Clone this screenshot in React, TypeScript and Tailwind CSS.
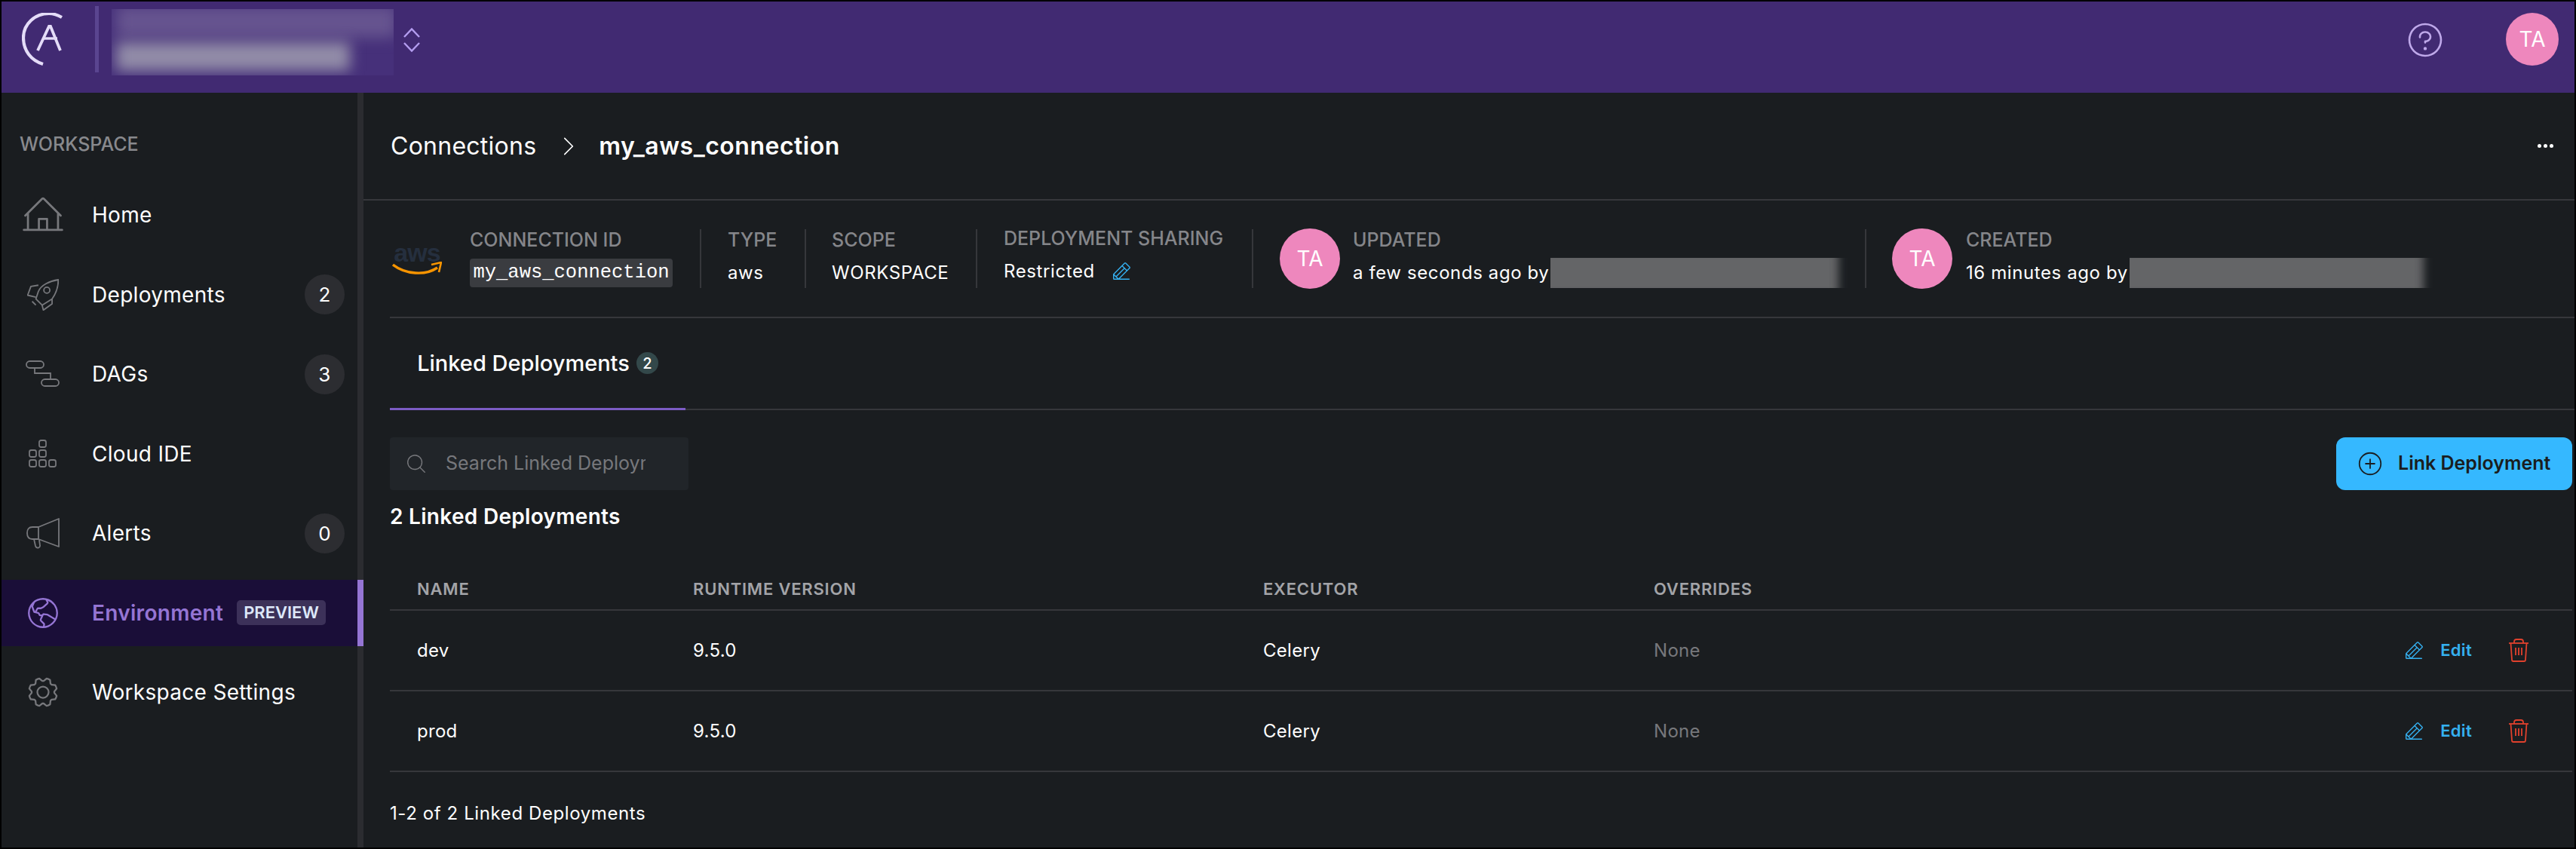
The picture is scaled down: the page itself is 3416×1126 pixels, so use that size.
import React from 'react';
import {
  PiCaretRightLight,
  PiGearLight,
  PiGlobeHemisphereWestLight,
  PiHouseLineLight,
  PiMagnifyingGlassLight,
  PiPencilLineLight,
  PiPlusCircleLight,
  PiQuestionLight,
} from 'react-icons/pi';

function AstroLogo() {
  return (
    <svg width="54" height="70" viewBox="0 0 54 70" fill="none" className="text-[#e4dcf8]">
      <path d="M53 6 C 46 2 41 1 36 1 C 17 1 2 15 2 33 C 2 50 12 63 28 68" stroke="currentColor" strokeWidth="4.2" />
      <path d="M21 50 L36 18 H38 L51 50" stroke="currentColor" strokeWidth="3.8" />
      <path d="M28 34 L47 34" stroke="currentColor" strokeWidth="3.4" />
    </svg>
  );
}

function UpDownIcon() {
  return (
    <svg width="22" height="32" viewBox="0 0 22 32" fill="none" stroke="#b49df0" strokeWidth="2.4">
      <path d="M1 12 L11 1.5 L21 12" />
      <path d="M1 20 L11 30.5 L21 20" />
    </svg>
  );
}

function RocketIcon() {
  return (
    <svg width="42" height="42" viewBox="0 0 127 127" fill="none" stroke="currentColor" strokeWidth="5.5" strokeLinejoin="round">
      <path d="M125 3 C 90 8 55 25 45 50 L35 80 L60 105 L100 80 C 118 55 125 30 125 3 Z" />
      <circle cx="79" cy="45" r="12" />
      <path d="M45 25 L15 30 L2 65 L35 73" />
      <path d="M100 80 L100 100 L65 125 L60 105" />
      <path d="M20 90 L35 105" />
    </svg>
  );
}

function DagIcon() {
  return (
    <svg width="46" height="36" viewBox="0 0 46 36" fill="none" stroke="currentColor" strokeWidth="1.8">
      <rect x="1" y="1" width="23" height="9" rx="4.5" />
      <path d="M12 10 V17 H33 V25" />
      <rect x="21" y="25" width="23" height="9" rx="4.5" />
    </svg>
  );
}

function IdeIcon() {
  return (
    <svg width="40" height="38" viewBox="0 0 40 38" fill="none" stroke="currentColor" strokeWidth="1.8">
      <rect x="15" y="1" width="9" height="9" rx="2.5" />
      <rect x="2" y="14" width="9" height="9" rx="2.5" />
      <rect x="15" y="14" width="9" height="9" rx="2.5" />
      <rect x="2" y="27" width="9" height="9" rx="2.5" />
      <rect x="15" y="27" width="9" height="9" rx="2.5" />
      <rect x="28" y="27" width="9" height="9" rx="2.5" />
    </svg>
  );
}

function MegaphoneIcon() {
  return (
    <svg width="44" height="41" viewBox="0 0 44 41" fill="none" stroke="currentColor" strokeWidth="1.8" strokeLinejoin="round">
      <path d="M43 1 L16 12 H8 Q1 12 1 20 Q1 28 8 28 H16 L43 38 Z" />
      <path d="M16 12 V28" />
      <path d="M10 28 L12 37 Q13 40 16 39.5 Q18.5 38.5 18 36 L17 29" />
    </svg>
  );
}

function TrashIcon() {
  return (
    <svg width="28" height="31" viewBox="0 0 28 31" fill="none" stroke="#e0412d" strokeWidth="1.8">
      <path d="M1 6 H27" />
      <path d="M8 6 V4 Q8 1 11 1 H17 Q20 1 20 4 V6" />
      <path d="M3.5 6 L5 28 Q5 30 7 30 H21 Q23 30 23 28 L24.5 6" />
      <path d="M10 12 V22 M14 12 V22 M18 12 V22" />
    </svg>
  );
}

function AwsLogo() {
  return (
    <div className="ml-[3px] flex flex-col items-center w-[66px] shrink-0">
      <span className="text-[34px] leading-[26px] font-bold text-[#252f3e] font-['Liberation_Sans',sans-serif] tracking-[-1px]">aws</span>
      <svg width="66" height="18" viewBox="0 0 66 18" fill="none" className="-mt-[1px]">
        <path d="M1 4 C 18 17 44 19 60 8" stroke="#f79400" strokeWidth="3.4" />
        <path d="M52 4 L65 1 L62 14" fill="none" stroke="#f79400" strokeWidth="2.6" />
      </svg>
    </div>
  );
}

function Avatar({ size }: { size: string }) {
  return (
    <div className={`${size} rounded-full bg-[#ee87bd] text-white flex items-center justify-center text-[28px] shrink-0`}>
      TA
    </div>
  );
}

function NavItem({ icon, label, count }: { icon: React.ReactNode; label: string; count?: number }) {
  return (
    <div className="h-[88px] flex items-center text-white text-[28px] tracking-[0.3px]">
      <div className="w-[58px] ml-[26px] mr-[36px] flex justify-center text-[#77787c]">{icon}</div>
      <span className="flex-1">{label}</span>
      {count !== undefined && (
        <div className="w-[53px] h-[53px] rounded-full bg-[#2c2d31] flex items-center justify-center text-[26px] mr-[17px]">
          {count}
        </div>
      )}
    </div>
  );
}

function Sidebar() {
  return (
    <aside className="w-[480px] shrink-0 border-r-[8px] border-[#2b2c30] flex flex-col">
      <div className="h-[118px] pl-[24px] pt-[47px] text-[25px] leading-[42px] font-medium text-[#88898d]">WORKSPACE</div>
      <div className="flex flex-col gap-[17.5px]">
        <NavItem icon={<PiHouseLineLight size={58} />} label="Home" />
        <NavItem icon={<RocketIcon />} label="Deployments" count={2} />
        <NavItem icon={<DagIcon />} label="DAGs" count={3} />
        <NavItem icon={<IdeIcon />} label="Cloud IDE" />
        <NavItem icon={<MegaphoneIcon />} label="Alerts" count={0} />
        <div className="relative h-[88px] -mr-[8px] bg-[#1a0e38] border-r-[8px] border-[#9575d4] flex items-center text-[#9575d4] text-[28px]">
          <div className="w-[58px] ml-[26px] mr-[36px] flex justify-center">
            <PiGlobeHemisphereWestLight size={50} />
          </div>
          <span className="font-semibold tracking-[0.3px]">Environment</span>
          <span className="ml-[18px] h-[33px] px-[9px] rounded-[5px] bg-[#3c3159] text-[#dde8fa] text-[22px] font-semibold flex items-center">PREVIEW</span>
        </div>
        <NavItem icon={<PiGearLight size={48} />} label="Workspace Settings" />
      </div>
    </aside>
  );
}

function Blurred() {
  return (
    <div className="flex-1 h-[40px] overflow-hidden">
      <div className="-ml-[12px] -mt-[10px] h-[60px] w-full bg-[#646567] blur-[6px]" />
    </div>
  );
}

function Label({ children }: { children: React.ReactNode }) {
  return <div className="text-[25px] leading-[26px] font-medium text-[#85868a] whitespace-nowrap">{children}</div>;
}

function Divider() {
  return <div className="w-[2px] h-[78px] bg-[#36373b] shrink-0" />;
}

function MetaBar() {
  return (
    <div className="h-[156px] ml-[35px] border-b-2 border-[#36373b] flex items-center">
      <AwsLogo />
      <div className="ml-[37px] mr-[36px]">
        <Label>CONNECTION ID</Label>
        <div className="mt-[12px] h-[38px] w-[269px] rounded-[4px] bg-[#3a3c40] text-white text-[25.5px] flex items-center justify-center font-['Liberation_Mono',monospace] whitespace-nowrap">my_aws_connection</div>
      </div>
      <Divider />
      <div className="w-[137px] pl-[35px]">
        <Label>TYPE</Label>
        <div className="mt-[12px] h-[38px] leading-[38px] text-white text-[24px] tracking-[0.6px]">aws</div>
      </div>
      <Divider />
      <div className="w-[225px] pl-[34px]">
        <Label>SCOPE</Label>
        <div className="mt-[12px] h-[38px] leading-[38px] text-white text-[24px] tracking-[0.6px]">WORKSPACE</div>
      </div>
      <Divider />
      <div className="w-[364px] pl-[35px] -mt-[4px]">
        <Label>DEPLOYMENT SHARING</Label>
        <div className="mt-[12px] h-[38px] flex items-center gap-[20px] text-white text-[24px] tracking-[0.6px]">
          Restricted
          <PiPencilLineLight size={30} className="text-[#35b0f0]" />
        </div>
      </div>
      <Divider />
      <div className="ml-[35px]"><Avatar size="w-[80px] h-[80px]" /></div>
      <div className="ml-[17px] w-[656px] mr-[23px]">
        <Label>UPDATED</Label>
        <div className="mt-[12px] h-[38px] flex items-center gap-[2px] text-white text-[24px] tracking-[0.6px] whitespace-nowrap">
          a few seconds ago by
          <Blurred />
        </div>
      </div>
      <Divider />
      <div className="ml-[34px]"><Avatar size="w-[80px] h-[80px]" /></div>
      <div className="ml-[18px] w-[619px]">
        <Label>CREATED</Label>
        <div className="mt-[12px] h-[38px] flex items-center gap-[2px] text-white text-[24px] tracking-[0.6px] whitespace-nowrap">
          16 minutes ago by
          <Blurred />
        </div>
      </div>
    </div>
  );
}

const rows = ['dev', 'prod'];

function RowActions() {
  return (
    <div className="flex items-center justify-end pr-[57px]">
      <PiPencilLineLight size={30} className="text-[#35b0f0]" />
      <span className="ml-[20px] mr-[48px] text-[22px] font-semibold text-[#35b0f0]">Edit</span>
      <TrashIcon />
    </div>
  );
}

function DeploymentsTable() {
  return (
    <div className="mr-[3px]">
      <div className="mt-[57px] h-[48px] pb-[8px] pl-[36px] grid grid-cols-[366px_756px_518px_1fr] items-center border-b-2 border-[#36373b] text-[22px] font-semibold tracking-[0.8px] text-[#a3a4a8]">
        <div>NAME</div>
        <div>RUNTIME VERSION</div>
        <div>EXECUTOR</div>
        <div>OVERRIDES</div>
      </div>
      {rows.map((name) => (
        <div key={name} className="h-[107px] pl-[36px] grid grid-cols-[366px_756px_518px_1fr] items-center border-b-2 border-[#36373b] text-[24px] tracking-[0.3px] text-white">
          <div>{name}</div>
          <div>9.5.0</div>
          <div>Celery</div>
          <div className="flex items-center justify-between text-[#77787c]">
            None
            <RowActions />
          </div>
        </div>
      ))}
    </div>
  );
}

export default function App() {
  return (
    <div className="w-[3416px] h-[1126px] box-border border-2 border-black bg-[#1a1d20] overflow-hidden flex flex-col font-['Inter',sans-serif]">
      <header className="h-[121px] shrink-0 bg-[#412a72] flex">
        <div className="ml-[27px] mt-[15px]"><AstroLogo /></div>
        <div className="ml-[43px] mt-[6px] w-[5px] h-[88px] bg-[#5a4590]" />
        <div className="ml-[17px] mt-[10px] w-[374px] h-[88px] overflow-hidden bg-[#46307a] flex flex-col gap-[6px] pl-[6px]">
          <div className="-mt-[4px] h-[42px] w-[372px] bg-[#66548f] blur-[9px]" />
          <div className="h-[38px] w-[310px] bg-[#928ca8] blur-[9px]" />
        </div>
        <div className="ml-[13px] mt-[35px] h-[32px]"><UpDownIcon /></div>
        <div className="flex-1" />
        <div className="mt-[23px] h-[56px] text-[#bfa9ea]"><PiQuestionLight size={56} /></div>
        <div className="ml-[79px] mr-[21px] mt-[15px]"><Avatar size="w-[70px] h-[70px]" /></div>
      </header>

      <div className="flex-1 flex min-h-0">
        <Sidebar />
        <main className="flex-1 min-w-0">
          <div className="h-[143px] border-b-2 border-[#36373b] flex items-center pl-[36px] pr-[28px]">
            <span className="text-[32px] tracking-[0.25px] text-white">Connections</span>
            <PiCaretRightLight size={34} className="text-white ml-[25px] mr-[24px]" />
            <span className="text-[32px] tracking-[0.5px] font-semibold text-white">my_aws_connection</span>
            <div className="flex-1" />
            <div className="flex gap-[3px]">
              <span className="w-[5px] h-[5px] rounded-full bg-white" />
              <span className="w-[5px] h-[5px] rounded-full bg-white" />
              <span className="w-[5px] h-[5px] rounded-full bg-white" />
            </div>
          </div>

          <MetaBar />

          <div className="h-[122px] ml-[35px] border-b-2 border-[#36373b] flex items-stretch">
            <div className="w-[392px] h-[122px] border-b-[3px] border-[#7c5cc4] flex items-center justify-center gap-[9px] text-[29px] font-medium text-white">
              Linked Deployments
              <span className="w-[29px] h-[29px] rounded-full bg-[#33484a] text-[20px] flex items-center justify-center">2</span>
            </div>
          </div>

          <div className="ml-[35px]">
            <div className="mt-[36px] flex justify-between items-start">
              <div className="w-[396px] h-[70px] rounded-[4px] bg-[#212529] flex items-center pl-[20px] text-[#77787c]">
                <PiMagnifyingGlassLight size={30} />
                <input
                  readOnly
                  placeholder="Search Linked Deployments"
                  className="ml-[24px] w-[265px] bg-transparent outline-none text-[25px] placeholder:text-[#77787c]"
                />
              </div>
              <button className="mr-[3px] w-[313px] h-[70px] rounded-[12px] bg-[#35b8ff] flex items-center pl-[26px] text-[#1a1d20] text-[25px] font-semibold">
                <PiPlusCircleLight size={38} />
                <span className="ml-[18px]">Link Deployment</span>
              </button>
            </div>
            <div className="mt-[15px] text-[28px] leading-[40px] tracking-[0.3px] font-semibold text-white">2 Linked Deployments</div>
            <DeploymentsTable />
            <div className="mt-[37px] text-[24px] leading-[36px] tracking-[0.6px] text-white">1-2 of 2 Linked Deployments</div>
          </div>
        </main>
      </div>
    </div>
  );
}
